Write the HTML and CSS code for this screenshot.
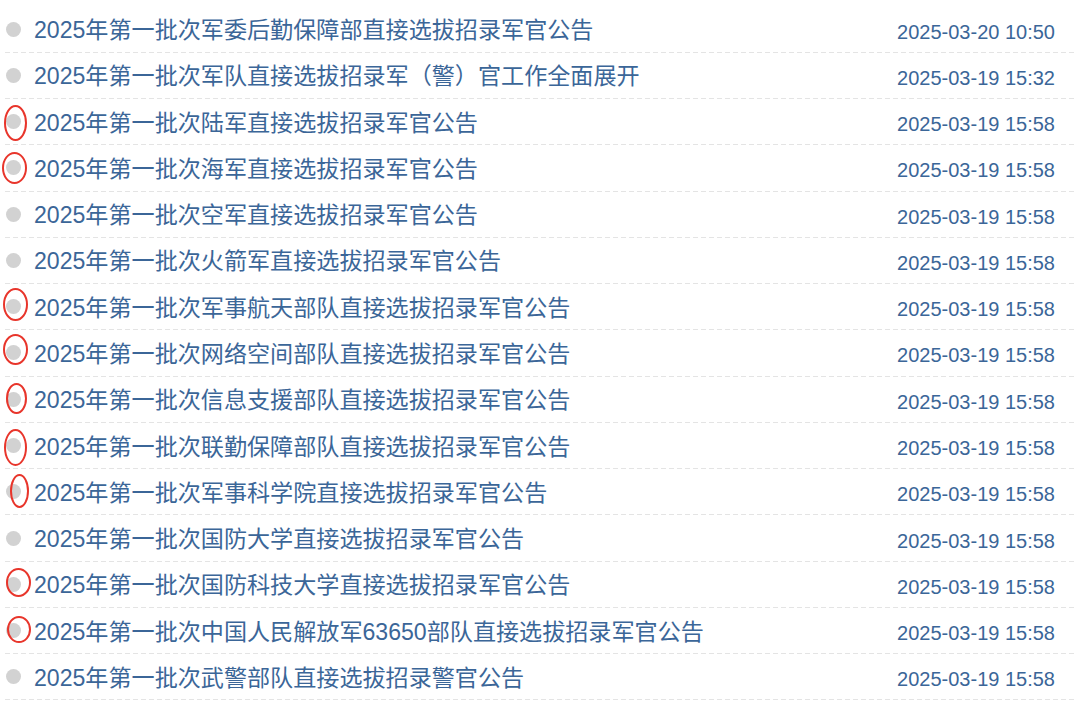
FILE: index.html
```html
<!DOCTYPE html>
<html lang="zh-CN">
<head>
<meta charset="utf-8">
<title>公告列表</title>
<link rel="stylesheet" href="styles.css">
</head>
<body>
<ul class="news-list">
  <li class="item"><span class="dot"></span><a class="title">2025年第一批次军委后勤保障部直接选拔招录军官公告</a><span class="date">2025-03-20 10:50</span></li>
  <li class="item"><span class="dot"></span><a class="title">2025年第一批次军队直接选拔招录军（警）官工作全面展开</a><span class="date">2025-03-19 15:32</span></li>
  <li class="item"><span class="dot"></span><span class="mark m3"></span><a class="title">2025年第一批次陆军直接选拔招录军官公告</a><span class="date">2025-03-19 15:58</span></li>
  <li class="item"><span class="dot"></span><span class="mark m4"></span><a class="title">2025年第一批次海军直接选拔招录军官公告</a><span class="date">2025-03-19 15:58</span></li>
  <li class="item"><span class="dot"></span><a class="title">2025年第一批次空军直接选拔招录军官公告</a><span class="date">2025-03-19 15:58</span></li>
  <li class="item"><span class="dot"></span><a class="title">2025年第一批次火箭军直接选拔招录军官公告</a><span class="date">2025-03-19 15:58</span></li>
  <li class="item"><span class="dot"></span><span class="mark m7"></span><a class="title">2025年第一批次军事航天部队直接选拔招录军官公告</a><span class="date">2025-03-19 15:58</span></li>
  <li class="item"><span class="dot"></span><span class="mark m8"></span><a class="title">2025年第一批次网络空间部队直接选拔招录军官公告</a><span class="date">2025-03-19 15:58</span></li>
  <li class="item"><span class="dot"></span><span class="mark m9"></span><a class="title">2025年第一批次信息支援部队直接选拔招录军官公告</a><span class="date">2025-03-19 15:58</span></li>
  <li class="item"><span class="dot"></span><span class="mark m10"></span><a class="title">2025年第一批次联勤保障部队直接选拔招录军官公告</a><span class="date">2025-03-19 15:58</span></li>
  <li class="item"><span class="dot"></span><span class="mark m11"></span><a class="title">2025年第一批次军事科学院直接选拔招录军官公告</a><span class="date">2025-03-19 15:58</span></li>
  <li class="item"><span class="dot"></span><a class="title">2025年第一批次国防大学直接选拔招录军官公告</a><span class="date">2025-03-19 15:58</span></li>
  <li class="item"><span class="dot"></span><span class="mark m13"></span><a class="title">2025年第一批次国防科技大学直接选拔招录军官公告</a><span class="date">2025-03-19 15:58</span></li>
  <li class="item"><span class="dot"></span><span class="mark m14"></span><a class="title">2025年第一批次中国人民解放军63650部队直接选拔招录军官公告</a><span class="date">2025-03-19 15:58</span></li>
  <li class="item"><span class="dot"></span><a class="title">2025年第一批次武警部队直接选拔招录警官公告</a><span class="date">2025-03-19 15:58</span></li>
</ul>
</body>
</html>
```
FILE: styles.css
```css
html, body {
  margin: 0;
  padding: 0;
  background: #ffffff;
}

body {
  font-family: "Liberation Sans", "Noto Sans CJK SC", sans-serif;
  color: #3b6698;
}

.news-list {
  list-style: none;
  margin: 0;
  padding: 6.5px 3px 0 5px;
}

.item {
  position: relative;
  display: flex;
  align-items: center;
  box-sizing: border-box;
  height: 46.27px;
  padding-bottom: 1px;
  background-image: repeating-linear-gradient(to right, #e4e4e4 0 5px, transparent 5px 8px);
  background-size: 100% 1px;
  background-position: left bottom;
  background-repeat: no-repeat;
}

.dot {
  flex: none;
  width: 15px;
  height: 15px;
  margin-left: 1px;
  border-radius: 50%;
  background: #d2d2d2;
}

.title {
  margin-left: 13px;
  padding-top: 2px;
  font-size: 23.1px;
  line-height: 30px;
  color: #3b6698;
  text-decoration: none;
  white-space: nowrap;
}

.date {
  margin-left: auto;
  margin-right: 22px;
  padding-top: 5px;
  font-size: 20px;
  line-height: 26px;
  color: #3b6698;
  white-space: nowrap;
}

.mark {
  position: absolute;
  box-sizing: border-box;
  border: 2px solid #e8352b;
  border-radius: 50%;
}

.m3  { left: -1px; top: 6px; width: 23px; height: 36px; }
.m4  { left: -3px; top: 7px; width: 25px; height: 32px; }
.m7  { left: -2px; top: 4px; width: 25px; height: 33px; }
.m8  { left: -2px; top: 4px; width: 25px; height: 31px; }
.m9  { left: 1px;  top: 6px; width: 21px; height: 31px; }
.m10 { left: -1px; top: 6px; width: 23px; height: 37px; }
.m11 { left: 5px;  top: 5px; width: 19px; height: 34px; }
.m13 { left: 1px;  top: 6px; width: 25px; height: 29px; }
.m14 { left: 2px;  top: 8px; width: 24px; height: 27px; }
```
